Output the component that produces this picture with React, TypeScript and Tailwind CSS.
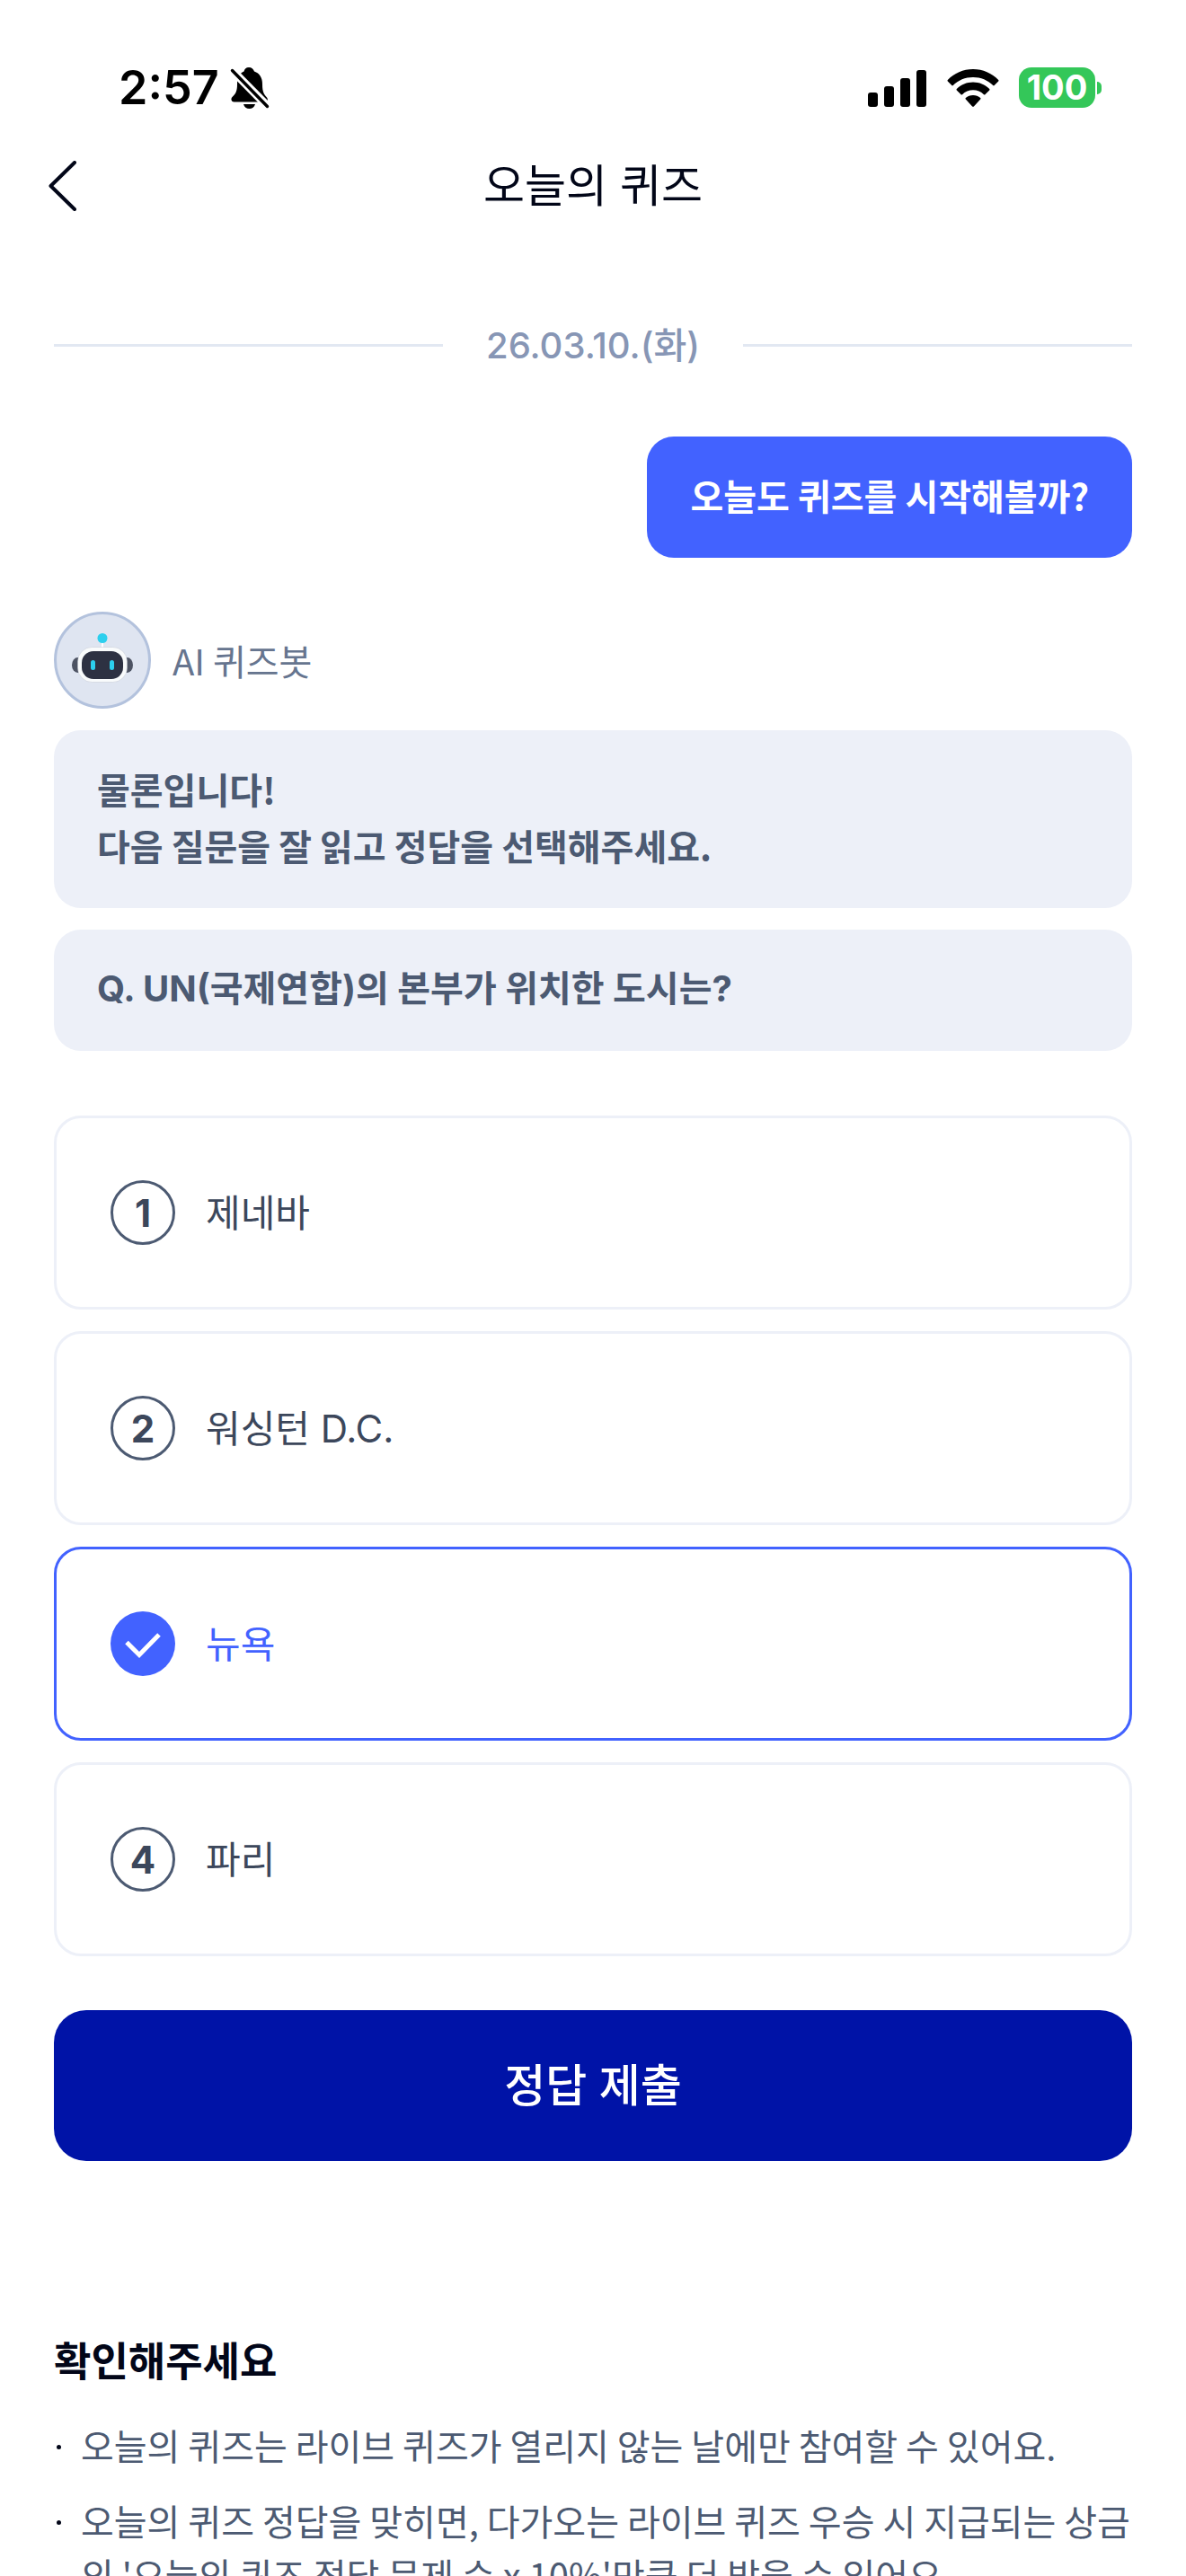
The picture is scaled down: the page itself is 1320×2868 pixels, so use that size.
import { useState } from "react";

const options = [
  { id: 1, label: "제네바" },
  { id: 2, label: "워싱턴 D.C." },
  { id: 3, label: "뉴욕" },
  { id: 4, label: "파리" },
];

const notices = [
  "오늘의 퀴즈는 라이브 퀴즈가 열리지 않는 날에만 참여할 수 있어요.",
  "오늘의 퀴즈 정답을 맞히면, 다가오는 라이브 퀴즈 우승 시 지급되는 상금의 '오늘의 퀴즈 정답 문제 수 x 10%'만큼 더 받을 수 있어요.",
];

const BellOffIcon = () => (
  <svg width="44" height="48" viewBox="0 0 44 48" aria-hidden="true">
    <path
      d="M21 1c3 0 5 2 6 4.500c6 2 9 7 9 14.500c0 9 2 11 5 14.500c1.500 2 1 5-1.500 5H4.500c-3 0-4-3.500-2-5.500C6 30.500 8 28 8 20c0-7.500 2-12 7.500-14.500C16 3 18 1 21 1z"
      fill="black"
    />
    <path d="M15 42h13c-1 3.300-3.200 5-6.500 5S16 45.300 15 42z" fill="black" />
    <path d="M2.500 4.500L42 44.500" stroke="white" strokeWidth="9" />
    <path d="M2.500 4.500L41.500 44.500" stroke="black" strokeWidth="3.400" strokeLinecap="round" />
  </svg>
);

const SignalIcon = () => (
  <svg width="66" height="42" viewBox="0 0 66 42" aria-hidden="true">
    <rect x="0" y="26" width="11" height="16" rx="3" />
    <rect x="18" y="19" width="11" height="23" rx="3" />
    <rect x="36" y="10" width="11" height="32" rx="3" />
    <rect x="54" y="1" width="11" height="41" rx="3" />
  </svg>
);

const WifiIcon = () => (
  <svg width="58" height="42" viewBox="0 0 58 42" aria-hidden="true">
    <path d="M29 0C18 0 8 4.500 .800 12c-.500.500-.500 1 0 1.500l4.500 4.600c.400.400 1 .400 1.500 0C12.500 12.300 20.300 9 29 9s16.500 3.300 22.200 9.100c.500.400 1.100.400 1.500 0l4.500-4.600c.500-.500.500-1 0-1.500C50 4.500 40 0 29 0z" />
    <path d="M29 14.500c-7 0-13.300 2.700-18.200 7.500c-.500.500-.500 1 0 1.500l4.800 4.700c.400.400 1 .400 1.400 0c3.200-3 7.400-4.900 12-4.900s8.800 1.900 12 4.900c.4.400 1 .400 1.400 0l4.800-4.700c.500-.500.500-1 0-1.500c-4.900-4.800-11.200-7.500-18.200-7.500z" />
    <path d="M29 29c-3.200 0-6 1.200-8.200 3c-.500.500-.500 1 0 1.500l7.300 7.900c.500.500 1.300.500 1.800 0l7.300-7.900c.500-.500.500-1 0-1.500c-2.200-1.800-5-3-8.200-3z" />
  </svg>
);

const BotAvatar = () => (
  <div className="flex size-[108px] items-center justify-center rounded-full border-3 border-[#b3c2dd] bg-[#dfe5f1]">
    <svg width="102" height="102" viewBox="0 0 102 102" aria-hidden="true">
      <ellipse cx="23.500" cy="56.500" rx="6.500" ry="8.500" fill="#4d5363" />
      <ellipse cx="78.500" cy="56.500" rx="6.500" ry="8.500" fill="#4d5363" />
      <rect x="50" y="30" width="2" height="8" fill="white" />
      <circle cx="51" cy="26.500" r="5.500" fill="#2ccfee" />
      <rect x="23.500" y="36.500" width="55" height="39" rx="16" fill="#f9fbfc" stroke="#b9bec9" strokeWidth=".4" />
      <rect x="28" y="41" width="46" height="31" rx="13" fill="#2d3142" />
      <rect x="38" y="51" width="5" height="11" rx="2.500" fill="#2ccfee" />
      <rect x="59" y="51" width="5" height="11" rx="2.500" fill="#2ccfee" />
    </svg>
  </div>
);

const App = () => {
  const [selected, setSelected] = useState(3);

  return (
    <div className="flex h-screen flex-col bg-white font-['Noto_Sans_CJK_KR',sans-serif] text-[#020618]">
      {/* Status bar */}
      <div className="flex shrink-0 items-center justify-between pt-[66px] pr-[94px] pl-[132px] font-['Inter',sans-serif] text-black">
        <div className="flex items-center gap-3">
          <span className="text-[52px] leading-[63px] font-semibold">2:57</span>
          <BellOffIcon />
        </div>
        <div className="flex items-center">
          <SignalIcon />
          <div className="ml-[22px]">
            <WifiIcon />
          </div>
          <div className="ml-[22px] flex items-center gap-[2px]">
            <span className="flex h-[45px] w-[85px] items-center justify-center rounded-[14px] bg-[#34c759] text-[38px] leading-[45px] font-bold text-white">
              100
            </span>
            <span className="h-[14px] w-[5px] rounded-r-full bg-[#34c759]" />
          </div>
        </div>
      </div>

      {/* Header */}
      <header className="grid h-[156px] shrink-0 grid-cols-[1fr_auto_1fr] items-center px-[54px]">
        <button type="button" aria-label="뒤로" className="justify-self-start">
          <svg width="32" height="56" viewBox="0 0 32 56" fill="none" aria-hidden="true">
            <path d="M29 2L2.500 28L29 54" stroke="#020618" strokeWidth="4" strokeLinecap="round" strokeLinejoin="round" />
          </svg>
        </button>
        <h1 className="font-['Inter','Noto_Sans_CJK_KR',sans-serif] text-[50px] leading-[63px]">오늘의 퀴즈</h1>
      </header>

      <main className="min-h-0 flex-1 overflow-y-auto px-[60px] pt-[68px] [scrollbar-width:none]">
        <div className="flex items-center gap-12">
          <div className="h-[3px] flex-1 bg-[#e2e8f2]" />
          <span className="font-['Inter','Noto_Sans_CJK_KR',sans-serif] text-[40px] leading-[63px] font-medium text-[#8796b5]">
            26.03.10.(화)
          </span>
          <div className="h-[3px] flex-1 bg-[#e2e8f2]" />
        </div>

        {/* Chat */}
        <div className="mt-[70px] flex justify-end">
          <p className="rounded-[30px] bg-[#4262ff] px-12 pt-[34px] pb-[38px] text-[40px] leading-[63px] font-bold text-white">
            오늘도 퀴즈를 시작해볼까?
          </p>
        </div>
        <div className="mt-[60px] flex items-center gap-6">
          <BotAvatar />
          <span className="text-[40px] leading-[63px] text-[#66758f]">AI 퀴즈봇</span>
        </div>
        <div className="mt-6 flex flex-col gap-6 text-[40px] leading-[63px] font-bold text-[#4c5a72]">
          <p className="rounded-[30px] bg-[#edf0f8] px-12 pt-[34px] pb-[38px]">
            물론입니다!
            <br />
            다음 질문을 잘 읽고 정답을 선택해주세요.
          </p>
          <p className="rounded-[30px] bg-[#edf0f8] px-12 pt-[34px] pb-[38px] font-['Inter','Noto_Sans_CJK_KR',sans-serif]">
            Q. UN(국제연합)의 본부가 위치한 도시는?
          </p>
        </div>

        {/* Options */}
        <form onSubmit={(e) => e.preventDefault()} className="font-['Inter','Noto_Sans_CJK_KR',sans-serif]">
          <div className="mt-[72px] flex flex-col gap-6">
            {options.map((option) => {
              const active = option.id === selected;
              return (
                <label
                  key={option.id}
                  className={`relative flex h-[216px] cursor-pointer items-center gap-[34px] rounded-[30px] border-3 px-[60px] text-[42px] leading-[63px] ${
                    active ? "border-[#4262ff] text-[#4262ff]" : "border-[#edf0f8] text-[#3c475b]"
                  }`}
                >
                  <input
                    type="radio"
                    name="answer"
                    value={option.id}
                    checked={active}
                    onChange={() => setSelected(option.id)}
                    className="sr-only"
                  />
                  {active ? (
                    <span className="flex size-[72px] items-center justify-center rounded-full bg-[#4262ff]">
                      <svg width="72" height="72" viewBox="0 0 72 72" fill="none" aria-hidden="true">
                        <path d="M18 34.500L32 48.500L54 26" stroke="white" strokeWidth="5" />
                      </svg>
                    </span>
                  ) : (
                    <span className="flex size-[72px] items-center justify-center rounded-full border-3 border-[#4c5a72] font-bold">
                      {option.id}
                    </span>
                  )}
                  <span>{option.label}</span>
                </label>
              );
            })}
          </div>
          <button
            type="submit"
            className="mt-[60px] h-[168px] w-full rounded-[36px] bg-[#0013a7] text-[50px] leading-[63px] font-medium text-white"
          >
            정답 제출
          </button>
        </form>

        {/* Notice */}
        <section className="mt-[188px] pb-[60px]">
          <h2 className="text-[45px] leading-[66px] font-bold">확인해주세요</h2>
          <ul className="mt-8 flex flex-col gap-6">
            {notices.map((notice) => (
              <li key={notice} className="flex text-[40px] leading-[60px] text-[#4c5a72]">
                <span className="flex h-[60px] w-[30px] shrink-0 items-center pt-1 pl-[3px]">
                  <span className="size-[5px] rounded-full bg-[#020618]" />
                </span>
                <p className="flex-1">{notice}</p>
              </li>
            ))}
          </ul>
        </section>
      </main>
    </div>
  );
};

export default App;
